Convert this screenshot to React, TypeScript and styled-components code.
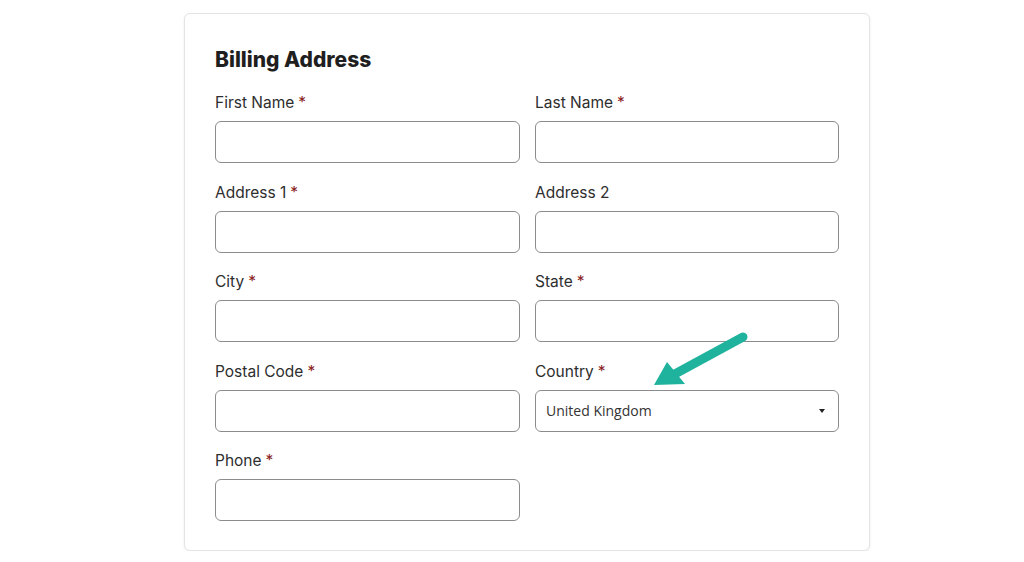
import styled, { createGlobalStyle } from 'styled-components';

const GlobalStyle = createGlobalStyle`
	body {
		margin: 0;
		background: #ffffff;
		font-family: Inter, 'Noto Sans', sans-serif;
		color: #2b2b2b;
	}
`;

const Page = styled.div`
	padding: 13px 0 0 184px;
`;

const Card = styled.form`
	position: relative;
	width: 686px;
	box-sizing: border-box;
	padding: 32px 31px 29px 30px;
	border: 1px solid #e4e4e4;
	border-radius: 6px;
	box-shadow: 0 1px 3px rgba(0, 0, 0, 0.07);
	background: #fff;
`;

const Title = styled.h2`
	margin: 0 0 18px;
	font-size: 21px;
	line-height: 28px;
	font-weight: 800;
	color: #1f1f1f;
`;

const Grid = styled.div`
	display: grid;
	grid-template-columns: 305px 304px;
	column-gap: 15px;
	row-gap: 18.5px;
`;

const Field = styled.div`
	display: flex;
	flex-direction: column;
	gap: 7px;
`;

const Label = styled.label`
	font-size: 15.5px;
	line-height: 22px;
	color: #2e2e2e;
`;

const Star = styled.span`
	color: #8a1c1c;
	margin-left: 4px;
`;

const Input = styled.input`
	box-sizing: border-box;
	height: 42px;
	width: 100%;
	border: 1px solid #8c8c8c;
	border-radius: 6px;
	background: #fff;
	padding: 0 10px;
	font-size: 14px;
`;

const Select = styled.div`
	box-sizing: border-box;
	height: 42px;
	border: 1px solid #8c8c8c;
	border-radius: 6px;
	display: flex;
	align-items: center;
	justify-content: space-between;
	padding: 0 13px 0 10px;
	font-family: 'Open Sans', sans-serif;
	font-size: 14px;
	color: #333;
`;

const Caret = styled.span`
	width: 0;
	height: 0;
	border-left: 3px solid transparent;
	border-right: 3px solid transparent;
	border-top: 4px solid #222;
`;

const Arrow = styled.svg`
	position: absolute;
	left: 466px;
	top: 315px;
	pointer-events: none;
`;

type FieldProps = { label: string; required?: boolean };

const TextField = ({ label, required }: FieldProps) => (
	<Field>
		<Label>
			{label}
			{required && <Star>*</Star>}
		</Label>
		<Input />
	</Field>
);

const App = () => {
	return (
		<Page>
			<GlobalStyle />
			<Card>
				<Title>Billing Address</Title>
				<Grid>
					<TextField label='First Name' required />
					<TextField label='Last Name' required />
					<TextField label='Address 1' required />
					<TextField label='Address 2' />
					<TextField label='City' required />
					<TextField label='State' required />
					<TextField label='Postal Code' required />
					<Field>
						<Label>
							Country<Star>*</Star>
						</Label>
						<Select>
							United Kingdom
							<Caret />
						</Select>
					</Field>
					<TextField label='Phone' required />
				</Grid>
				{/* teal pointer arrow over the country select */}
				<Arrow width='100' height='65' viewBox='0 0 100 65'>
					<line x1='92' y1='8' x2='22' y2='46' stroke='#1fb39e' strokeWidth='9' strokeLinecap='round' />
					<polygon points='3,56 16,33 34,55' fill='#1fb39e' />
				</Arrow>
			</Card>
		</Page>
	);
};

export default App;
